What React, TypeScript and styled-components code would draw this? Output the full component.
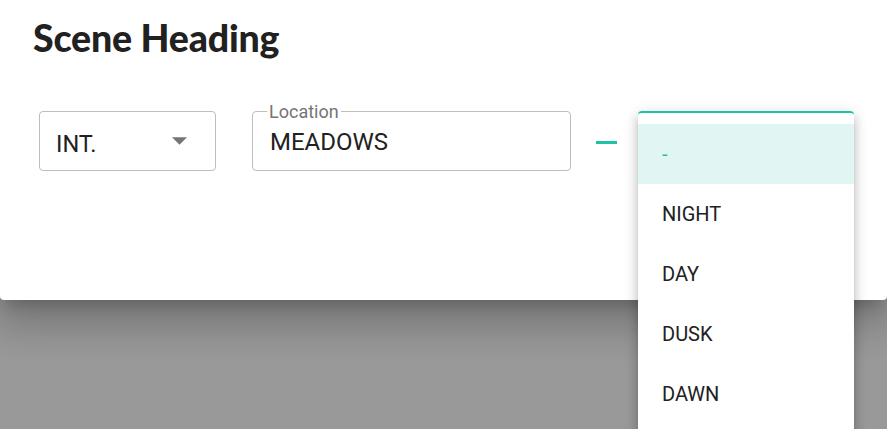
import React from "react";
import styled, { createGlobalStyle } from "styled-components";

const Global = createGlobalStyle`
  html, body { margin: 0; padding: 0; }
  body { background: #999999; font-family: Roboto, "Liberation Sans", sans-serif; }
`;

const TEAL = "#1ec3a6";

const Backdrop = styled.div`
  height: 100vh;
  overflow: hidden;
  background: #999999;
`;

const Dialog = styled.div`
  background: #ffffff;
  height: 300px;
  box-sizing: border-box;
  border-radius: 0 0 4px 4px;
  box-shadow: 0 11px 15px -7px rgba(0,0,0,0.2), 0 24px 38px 3px rgba(0,0,0,0.14), 0 9px 46px 8px rgba(0,0,0,0.12);
  padding: 14px 0 0 33px;
`;

const Title = styled.h2`
  margin: 0;
  font-family: Lato, "Open Sans", sans-serif;
  font-weight: 900;
  font-size: 37.5px;
  line-height: 48px;
  color: #212121;
  letter-spacing: -0.2px;
`;

const Row = styled.div`
  display: flex;
  align-items: flex-start;
  margin-top: 49px;
  padding-left: 6px;
`;

const SelectBox = styled.div`
  box-sizing: border-box;
  width: 177px;
  height: 60px;
  border: 1px solid #bdbdbd;
  border-radius: 4px;
  display: flex;
  align-items: center;
  justify-content: space-between;
  padding: 0 28px 0 16px;
  font-size: 23.5px;
  color: #212121;
`;

const SelectValue = styled.span`
  padding-top: 5px;
`;

const Field = styled.fieldset`
  box-sizing: border-box;
  width: 319px;
  height: 66px;
  margin: -6px 0 0 36px;
  padding: 0 17px;
  border: 1px solid #bdbdbd;
  border-radius: 4px;
`;

const Legend = styled.legend`
  padding: 0 2px;
  margin-left: -3px;
  font-size: 18px;
  line-height: 12px;
  color: #757575;
`;

const LegendText = styled.span`
  position: relative;
  top: 1px;
`;

const FieldValue = styled.div`
  font-size: 24px;
  color: #212121;
  padding-top: 11px;
`;

const Dash = styled.div`
  width: 21px;
  height: 3px;
  background: ${TEAL};
  margin: 30px 21px 0 25px;
`;

const TimeSelect = styled.div`
  position: relative;
  width: 216px;
  height: 60px;
`;

const Menu = styled.ul`
  position: absolute;
  left: 0;
  top: 0;
  width: 216px;
  margin: 0;
  padding: 11px 0 60px;
  list-style: none;
  background: #ffffff;
  border-top: 2px solid ${TEAL};
  border-radius: 4px;
  box-shadow: 0 5px 5px -3px rgba(0,0,0,0.2), 0 8px 10px 1px rgba(0,0,0,0.14), 0 3px 14px 2px rgba(0,0,0,0.12);
`;

const Item = styled.li<{ $selected?: boolean }>`
  height: 60px;
  display: flex;
  align-items: center;
  padding-left: 24px;
  font-size: 20px;
  color: ${(p) => (p.$selected ? TEAL : "#212121")};
  background: ${(p) => (p.$selected ? "#e1f5f2" : "transparent")};
`;

const Arrow = () => (
  <svg width="15" height="8" viewBox="0 0 10 5">
    <path d="M0 0l5 5 5-5z" fill="#757575" />
  </svg>
);

export default function App() {
  return (
    <>
      <Global />
      <Backdrop>
        <Dialog>
          <Title>Scene Heading</Title>
          <Row>
            <SelectBox>
              <SelectValue>INT.</SelectValue>
              <Arrow />
            </SelectBox>
            <Field>
              <Legend>
                <LegendText>Location</LegendText>
              </Legend>
              <FieldValue>MEADOWS</FieldValue>
            </Field>
            <Dash />
            <TimeSelect>
              <Menu>
                <Item $selected>-</Item>
                <Item>NIGHT</Item>
                <Item>DAY</Item>
                <Item>DUSK</Item>
                <Item>DAWN</Item>
              </Menu>
            </TimeSelect>
          </Row>
        </Dialog>
      </Backdrop>
    </>
  );
}
